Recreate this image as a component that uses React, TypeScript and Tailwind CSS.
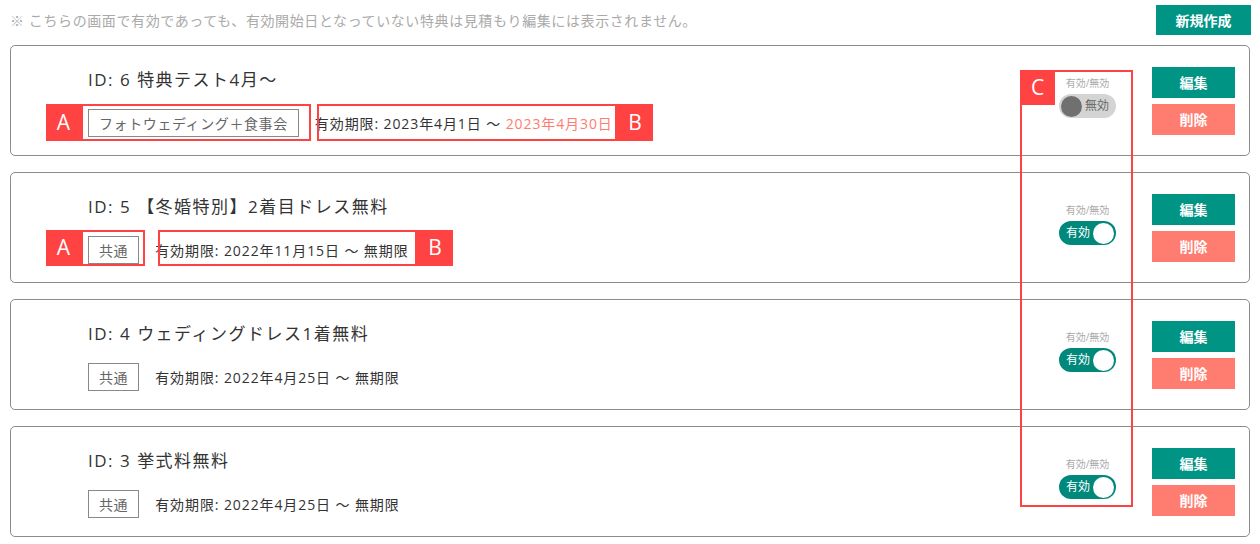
import React from "react";

interface Tokuten {
    id: number;
    name: string;
    target: string;
    start: string;
    end: string;
    endExpired: boolean;
    active: boolean;
}

const items: Tokuten[] = [
    { id: 6, name: "特典テスト4月〜", target: "フォトウェディング＋食事会", start: "2023年4月1日", end: "2023年4月30日", endExpired: true, active: false },
    { id: 5, name: "【冬婚特別】2着目ドレス無料", target: "共通", start: "2022年11月15日", end: "無期限", endExpired: false, active: true },
    { id: 4, name: "ウェディングドレス1着無料", target: "共通", start: "2022年4月25日", end: "無期限", endExpired: false, active: true },
    { id: 3, name: "挙式料無料", target: "共通", start: "2022年4月25日", end: "無期限", endExpired: false, active: true },
];

const Toggle = ({ active }: { active: boolean }) => {
    if (active) {
        return (
            <div className="flex items-center justify-between w-[57px] h-[24px] rounded-full bg-[#00897b] pl-[7px] pr-[2px]">
                <span className="text-white text-[12px] leading-none">有効</span>
                <span className="w-[21px] h-[21px] rounded-full bg-white"></span>
            </div>
        );
    }
    return (
        <div className="flex items-center justify-between w-[57px] h-[24px] rounded-full bg-[#d4d4d4] pl-[2px] pr-[7px]">
            <span className="w-[21px] h-[21px] rounded-full bg-[#707070]"></span>
            <span className="text-[#666] text-[12px] leading-none">無効</span>
        </div>
    );
};

const Card = ({ data }: { data: Tokuten }) => {
    return (
        <div className="flex items-stretch h-[111px] border border-[#8c8c8c] rounded-[5px] bg-white pl-[77px] pr-[14px]">
            <div className="flex-1 flex flex-col pt-[22px]">
                <h2 className="text-[17px] leading-[24px] text-[#333] tracking-[1.5px]">ID: {data.id} {data.name}</h2>
                <div className="flex items-center mt-[17px]">
                    <span className="h-[28px] flex items-center border border-[#888] px-[10px] text-[14px] tracking-[0.6px] text-[#666]">{data.target}</span>
                    <span className="ml-[16px] text-[14px] tracking-[0.9px] text-[#333]">
                        有効期限: {data.start} 〜 <span className={data.endExpired ? "text-[#ff7c70]" : ""}>{data.end}</span>
                    </span>
                </div>
            </div>
            <div className="flex flex-col items-center w-[57px] pt-[30px]">
                <span className="text-[10px] leading-[14px] text-[#aaa]">有効/無効</span>
                <div className="mt-[4px]">
                    <Toggle active={data.active} />
                </div>
            </div>
            <div className="flex flex-col justify-center gap-[6px] ml-[36px]">
                <button className="w-[83px] h-[31px] bg-[#009485] text-white text-[14px] font-bold">編集</button>
                <button className="w-[83px] h-[31px] bg-[#ff7c70] text-white text-[14px] font-bold">削除</button>
            </div>
        </div>
    );
};

// 注釈 (赤枠 + ラベル)
const Mark = ({ label, left, top, width, height, side }: { label: string, left: number, top: number, width: number, height: number, side: "left" | "right" }) => {
    return (
        <div className="absolute flex pointer-events-none" style={{ left, top, width, height }}>
            {side === "left" && (
                <span className="w-[35px] bg-[#ff4242] text-white text-[21px] flex items-center justify-center shrink-0">{label}</span>
            )}
            <span className="flex-1 border-2 border-[#ff4242]"></span>
            {side === "right" && (
                <span className="w-[36px] bg-[#ff4242] text-white text-[21px] flex items-center justify-center shrink-0">{label}</span>
            )}
        </div>
    );
};

export default function App() {
    return (
        <div
            className="relative w-[1260px] h-[544px] bg-white overflow-hidden"
            style={{ fontFamily: '"Open Sans", "Noto Sans CJK JP", sans-serif' }}
        >
            <div className="px-[10px] pt-[5px]">
                <div className="flex items-center justify-between h-[30px]">
                    <p className="text-[14px] text-[#aaa] tracking-[0.6px]">※ こちらの画面で有効であっても、有効開始日となっていない特典は見積もり編集には表示されません。</p>
                    <button className="w-[95px] h-[30px] bg-[#009485] text-white text-[14px] font-bold -mr-[1px]">新規作成</button>
                </div>
                <div className="flex flex-col gap-[16px] mt-[10px]">
                    {items.map((item) => (
                        <Card key={item.id} data={item} />
                    ))}
                </div>
            </div>

            <Mark label="A" left={46} top={104} width={265} height={37} side="left" />
            <Mark label="B" left={317} top={104} width={336} height={37} side="right" />
            <Mark label="A" left={46} top={230} width={99} height={36} side="left" />
            <Mark label="B" left={158} top={230} width={295} height={36} side="right" />

            <div className="absolute left-[1020px] top-[70px] w-[113px] h-[437px] border-2 border-[#ff4242] pointer-events-none">
                <span className="absolute -left-[2px] -top-[2px] w-[35px] h-[35px] bg-[#ff4242] text-white text-[21px] flex items-center justify-center">C</span>
            </div>
        </div>
    );
}
